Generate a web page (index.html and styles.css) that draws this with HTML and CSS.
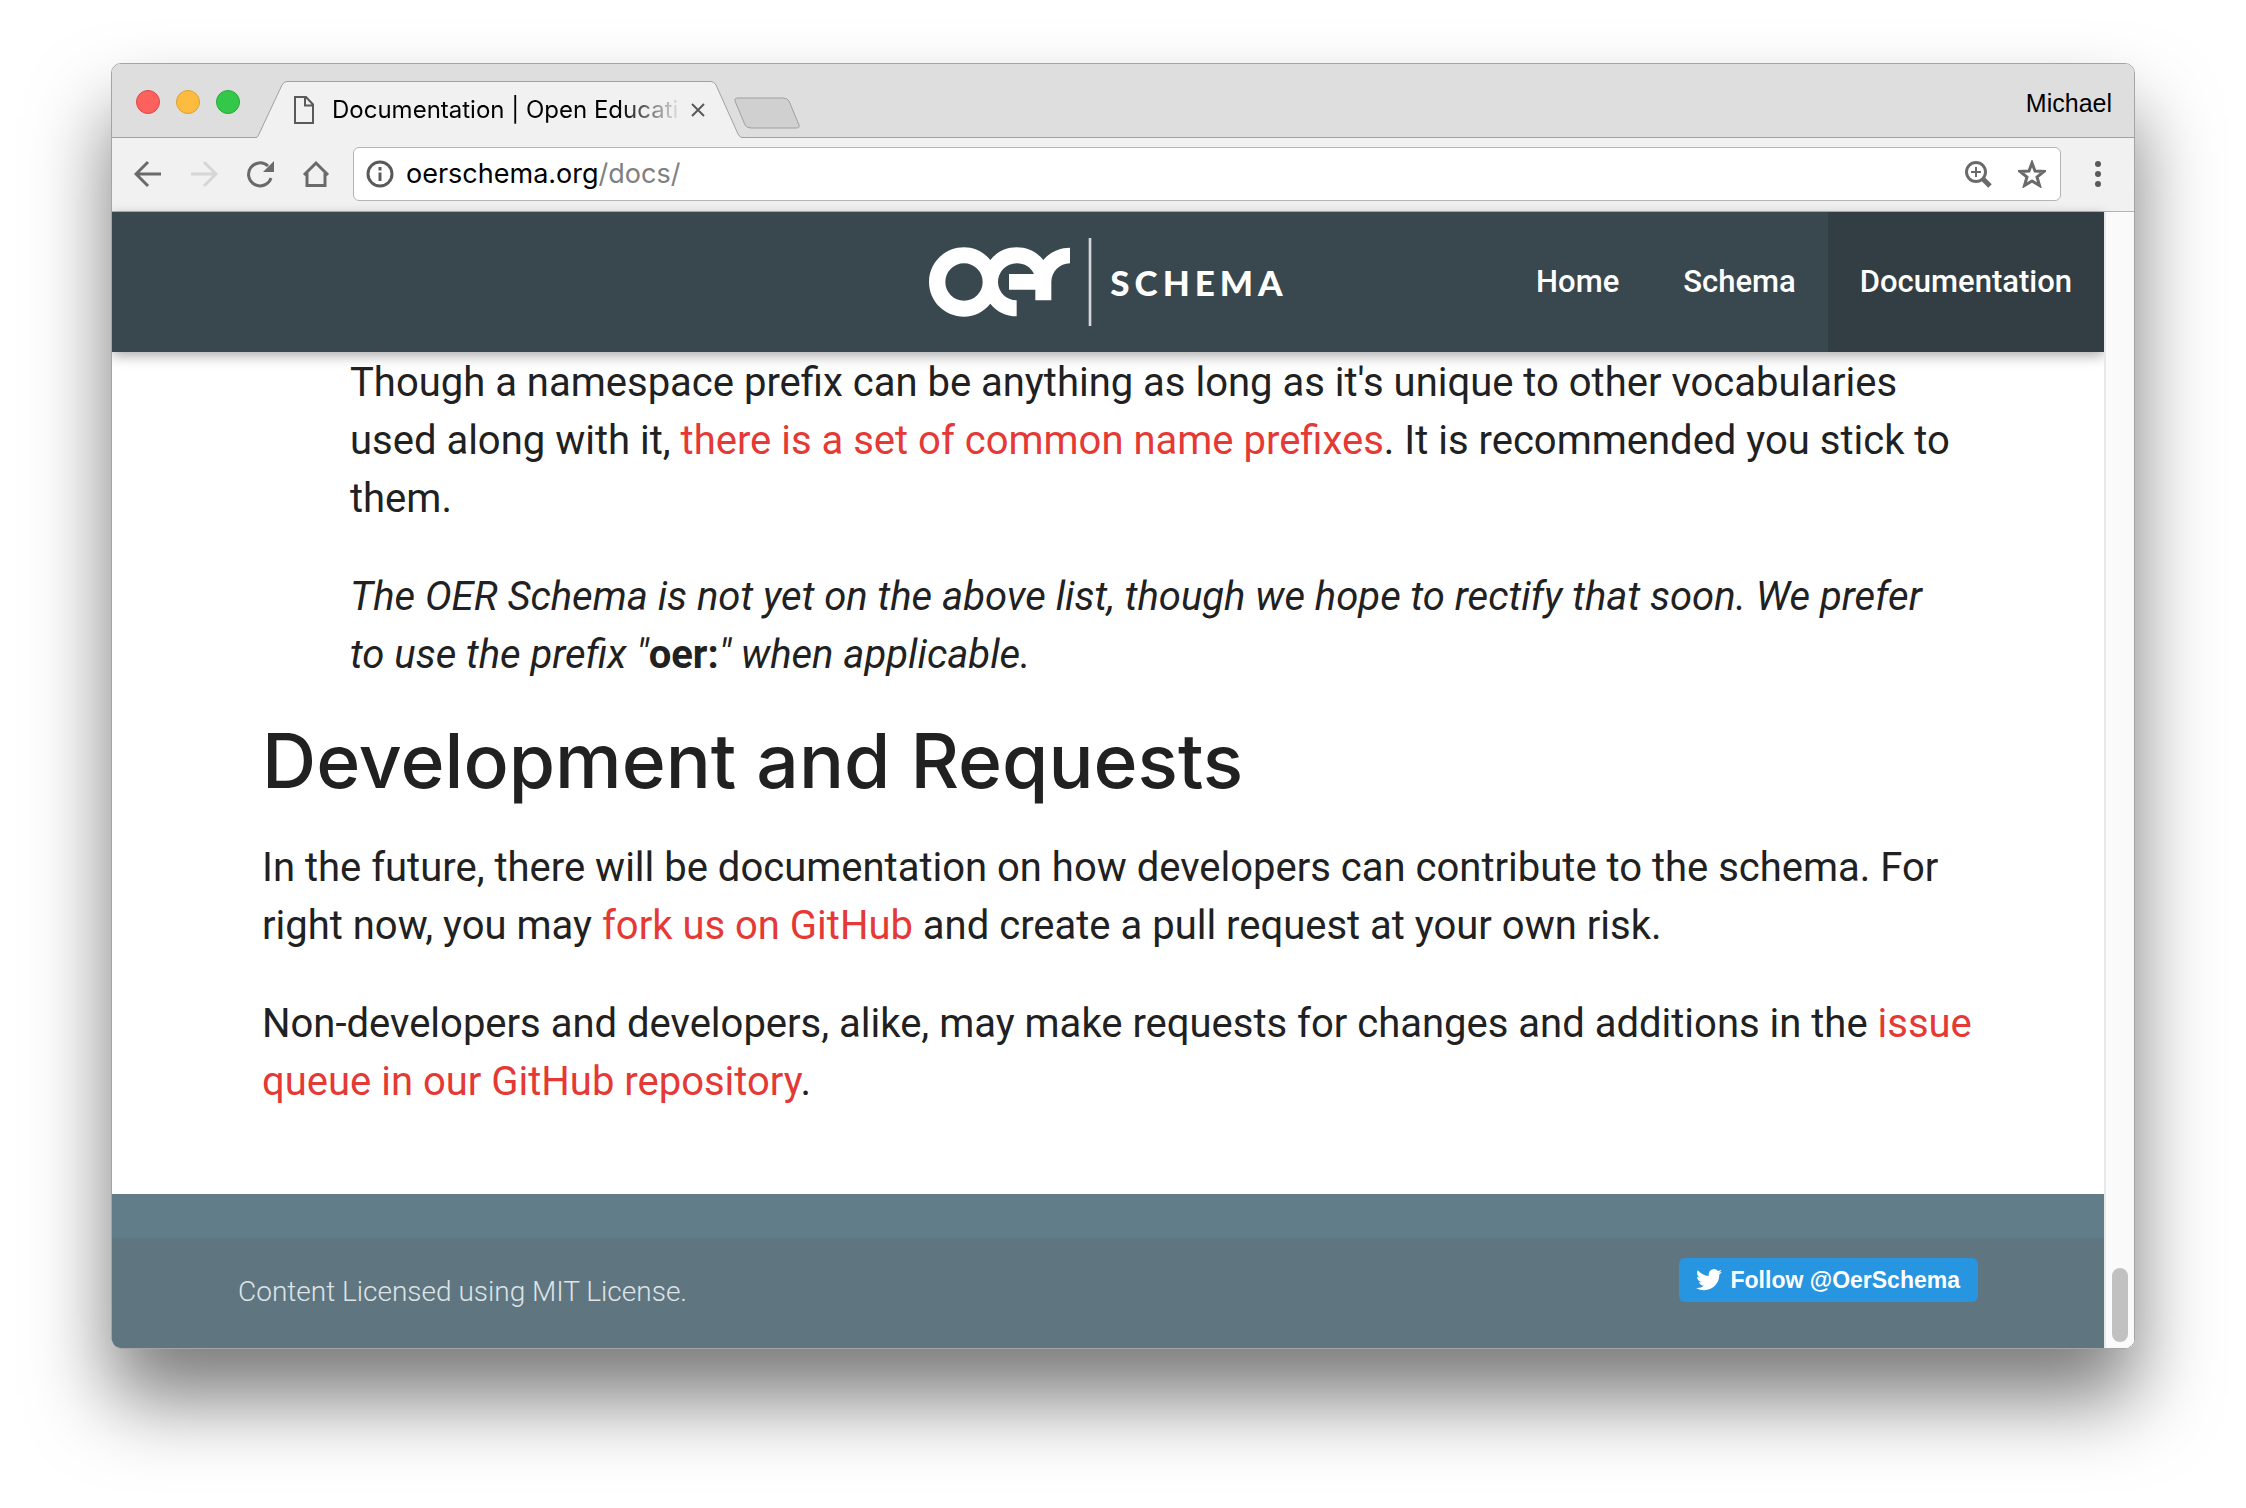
FILE: index.html
```html
<!DOCTYPE html>
<html lang="en">
<head>
<meta charset="utf-8">
<title>Documentation | Open Educational Resources Schema</title>
<link rel="stylesheet" href="styles.css">
</head>
<body>
<div class="window">
  <div class="tabstrip">
    <div class="lights">
      <button class="light light-close" aria-label="Close window"></button>
      <button class="light light-min" aria-label="Minimize window"></button>
      <button class="light light-max" aria-label="Zoom window"></button>
    </div>
    <div class="tab">
      <svg class="tab-shape" viewBox="0 0 486 58" aria-hidden="true"><path class="tab-fill" d="M0 58C2 57 2 56 3 54L26 5Q28 1.500 31 1.500H455Q458 1.500 460 5L482 54Q484 57.500 486 57.500V58Z"/><path class="tab-line" d="M0 57.500C2 57 2 56 3 54L26 5Q28 1.500 31 1.500H455Q458 1.500 460 5L482 54Q484 57.500 486 57.500"/></svg>
      <svg class="page-icon" viewBox="0 0 20 28" aria-hidden="true"><path d="M1 1H12L19 8.500V27H1ZM11 1V9.500H19"/></svg>
      <span class="tab-title">Documentation | Open Educati</span>
      <button class="tab-close" aria-label="Close tab"><svg viewBox="0 0 14 14"><path d="M1 1L13 13M13 1L1 13"/></svg></button>
    </div>
    <button class="new-tab" aria-label="New tab"><svg viewBox="0 0 66 32"><path d="M4 1H49Q53 1 55 4L65 28Q66 31 62 31H17Q13 31 11 28L1 4Q0 1 4 1Z"/></svg></button>
    <span class="profile">Michael</span>
  </div>
  <div class="toolbar">
    <div class="nav-buttons">
      <button class="tool" aria-label="Back"><svg viewBox="0 0 28 28"><path d="M27 14H3M14 2L2 14L14 26"/></svg></button>
      <button class="tool tool-off" aria-label="Forward" disabled><svg viewBox="0 0 28 28"><path d="M1 14H25M14 2L26 14L14 26"/></svg></button>
      <button class="tool" aria-label="Reload"><svg viewBox="0 0 28 28"><path d="M25 18A11.500 11.500 0 1 1 22 6"/><path class="solid" d="M28 1V12H17Z"/></svg></button>
      <button class="tool" aria-label="Home"><svg viewBox="0 0 28 28"><path d="M2 15L14 3L26 15M5 13V25.500H23V13"/></svg></button>
    </div>
    <form class="address">
      <svg class="info" viewBox="0 0 28 28" aria-hidden="true"><circle cx="14" cy="14" r="12"/><path d="M14 12.500V21M14 7V10.500"/></svg>
      <span class="url">oerschema.org<span class="path">/docs/</span></span>
      <button type="button" class="tool" aria-label="Zoom"><svg viewBox="0 0 28 28"><circle cx="12" cy="12" r="9.500"/><path class="thick" d="M19 19L26 26"/><path class="thin" d="M12 7V17M7 12H17"/></svg></button>
      <button type="button" class="tool" aria-label="Bookmark"><svg viewBox="0 0 28 28"><path d="M14 3L17 11L26 11.500L19 17L21.500 25.500L14 21L6.500 25.500L9 17L2 11.500L11 11Z"/></svg></button>
    </form>
    <button class="menu" aria-label="Menu"><svg viewBox="0 0 6 28"><circle cx="3" cy="4" r="3"/><circle cx="3" cy="14" r="3"/><circle cx="3" cy="24" r="3"/></svg></button>
  </div>
  <div class="viewport">
    <div class="page">
      <header class="site-header">
        <a class="logo" href="#">
          <svg viewBox="84 84 492 264" aria-hidden="true">
            <path fill-rule="evenodd" d="M271 150C289 127 317 112 350 112C383 112 412 127 430 150C449 127 477 113 510 113V160C479 160 454 185 454 216V271H406V239H327V192H402C393 172 373 160 350 160C319 160 294 185 294 216C294 246 319 271 350 271V319C318 319 289 304 271 281C252 304 224 320 192 320C134 320 87 274 87 216C87 158 134 112 192 112C224 112 252 127 271 150ZM192 160A56 56 0 1 0 192 272A56 56 0 1 0 192 160Z"/>
            <path class="rule" d="M566 84H574V348H566Z"/>
          </svg>
          <span class="logo-word">SCHEMA</span>
        </a>
        <nav class="site-nav">
          <a href="#">Home</a>
          <a href="#">Schema</a>
          <a class="active" href="#">Documentation</a>
        </nav>
      </header>
      <main class="content">
        <div class="indent">
          <p>Though a namespace prefix can be anything as long as it's unique to other vocabularies used along with it, <a href="#">there is a set of common name prefixes</a>. It is recommended you stick to them.</p>
          <p><em>The OER Schema is not yet on the above list, though we hope to rectify that soon. We prefer to use the prefix "<b>oer:</b>" when applicable.</em></p>
        </div>
        <h2>Development and Requests</h2>
        <p>In the future, there will be documentation on how developers can contribute to the schema. For right now, you may <a href="#">fork us on GitHub</a> and create a pull request at your own risk.</p>
        <p>Non-developers and developers, alike, may make requests for changes and additions in the <a href="#">issue queue in our GitHub repository</a>.</p>
      </main>
      <footer class="site-footer">
        <div class="footer-bar">
          <p>Content Licensed using MIT License.</p>
          <a class="follow" href="#"><svg viewBox="0 0 24 20" aria-hidden="true"><path d="M24 2.400c-.9.400-1.800.700-2.800.800 1-.6 1.800-1.600 2.200-2.700-1 .6-2 1-3.100 1.200A4.900 4.900 0 0 0 11.900 6.200C7.800 6 4.200 4 1.700.9.400 3.200 1 6 3.200 7.500c-.8 0-1.600-.2-2.200-.6 0 2.300 1.600 4.400 3.900 4.900-.7.200-1.500.2-2.200.1.600 2 2.400 3.400 4.600 3.400A9.900 9.900 0 0 1 0 17.300 14 14 0 0 0 7.500 19.500c9.100 0 14.300-7.700 14-14.600 1-.7 1.800-1.600 2.500-2.500z"/></svg>Follow @OerSchema</a>
        </div>
      </footer>
    </div>
    <div class="scrollbar"><div class="thumb"></div></div>
  </div>
</div>
</body>
</html>
```
FILE: styles.css
```css
* { box-sizing: border-box; }

body {
  margin: 0;
  padding: 63px 111px 159px;
  background: #fff;
  color: #212121;
  font-family: Roboto, "Liberation Sans", sans-serif;
}

button {
  padding: 0;
  border: 0;
  background: none;
}

svg { display: block; }

.window {
  overflow: hidden;
  border: 1px solid #a4a4a4;
  border-radius: 10px;
  box-shadow: 0 50px 80px rgba(0, 0, 0, 0.52);
}

/* Tab strip */
.tabstrip {
  display: flex;
  height: 74px;
  padding-left: 24px;
  border-bottom: 1px solid #a0a0a0;
  background: #dedede;
}

.lights {
  display: flex;
  gap: 16px;
  width: 120px;
  padding-top: 26px;
}

.light {
  width: 24px;
  height: 24px;
  border: 1px solid #df4744;
  border-radius: 50%;
  background: #fc615d;
}

.light-min { border-color: #de9f34; background: #fdbc40; }
.light-max { border-color: #27aa35; background: #34c84a; }

.tab {
  position: relative;
  display: flex;
  align-items: center;
  width: 486px;
  height: 58px;
  margin-top: 16px;
  padding: 2px 37px 0 38px;
}

.tab-shape {
  position: absolute;
  top: 0;
  left: 0;
  width: 486px;
  height: 58px;
}

.tab-fill { fill: #f1f1f1; }
.tab-line { fill: none; stroke: #a0a0a0; stroke-width: 1; }

.page-icon {
  position: relative;
  width: 20px;
  height: 28px;
  fill: none;
  stroke: #5a5a5a;
  stroke-width: 2;
}

.tab-title {
  position: relative;
  flex: 1;
  overflow: hidden;
  margin: 0 8px 0 18px;
  color: #000;
  font: 24px/32px Inter, sans-serif;
  white-space: nowrap;
  mask-image: linear-gradient(to left, transparent, #000 64px);
}

.tab-close { position: relative; }
.tab-close svg { width: 14px; height: 14px; stroke: #5a5a5a; stroke-width: 2; }

.new-tab { align-self: flex-start; margin: 33px 0 0 -8px; }
.new-tab svg { width: 66px; height: 32px; fill: #d0d0d0; stroke: #a0a0a0; }

.profile {
  margin: 23px 22px 0 auto;
  color: #000;
  font: 25px/32px "Liberation Sans", sans-serif;
}

/* Toolbar */
.toolbar {
  display: flex;
  align-items: center;
  height: 74px;
  padding: 0 33px 2px 22px;
  border-bottom: 1px solid #b4b4b4;
  background: #f1f1f1;
}

.nav-buttons { display: flex; gap: 28px; }

.tool svg {
  width: 28px;
  height: 28px;
  fill: none;
  stroke: #6a6a6a;
  stroke-width: 3;
}

.tool-off svg { stroke: #d6d6d6; }
.tool .solid { fill: #6a6a6a; stroke: none; }
.tool .thick { stroke-width: 5; }
.tool .thin { stroke-width: 2; }

.address {
  display: flex;
  flex: 1;
  align-items: center;
  gap: 26px;
  height: 54px;
  margin: 0 34px 0 23px;
  padding: 0 14px 0 12px;
  border: 1px solid #b4b4b4;
  border-radius: 6px;
  background: #fff;
}

.info { width: 28px; height: 28px; fill: none; stroke: #5a5a5a; stroke-width: 3; }

.url {
  flex: 1;
  margin-left: -14px;
  color: #000;
  font: 27px/36px Inter, sans-serif;
}

.path { color: #808080; }

.menu svg { width: 6px; height: 28px; fill: #5a5a5a; }

/* Page */
.viewport { display: flex; background: #fff; }
.page { flex: 1; }

.site-header {
  position: relative;
  display: grid;
  grid-template-columns: 1fr auto 1fr;
  height: 140px;
  background: #39474e;
  box-shadow: 0 4px 12px rgba(0, 0, 0, 0.32);
}

.logo {
  display: flex;
  grid-column: 2;
  align-items: center;
  gap: 18px;
  color: #fff;
  text-decoration: none;
}

.logo svg { width: 164px; height: 88px; fill: #fff; }
.logo .rule { fill: #d3d7d9; }

.logo-word {
  font: 900 35px/40px Lato, sans-serif;
  letter-spacing: 5px;
}

.site-nav { display: flex; justify-content: flex-end; }

.site-nav a {
  display: flex;
  align-items: center;
  padding: 0 32px 2px;
  color: #fff;
  font-size: 31px;
  font-weight: 500;
  text-decoration: none;
}

.site-nav .active { background: #323e44; }

.content { padding: 2px 130px 83px 150px; }
.indent { padding: 0 20px 0 88px; }

.content p {
  margin: 0 0 40px;
  font-size: 40px;
  line-height: 58px;
}

.content p:last-child { margin-bottom: 0; }
.content b { font-style: normal; }
.content a { color: #e53935; text-decoration: none; }

.content h2 {
  margin: 37px 0 38px;
  font: 500 75px/80px Inter, sans-serif;
}

/* Footer */
.site-footer { padding-top: 44px; background: #607d89; }

.footer-bar {
  display: flex;
  justify-content: space-between;
  align-items: flex-start;
  height: 110px;
  padding: 20px 126px 0;
  background: #5f7681;
}

.footer-bar p {
  margin: 16px 0 0;
  color: #dfe4e6;
  font-size: 28px;
  font-weight: 300;
  line-height: 36px;
}

.follow {
  display: flex;
  align-items: center;
  gap: 9px;
  height: 44px;
  padding: 0 18px 0 17px;
  border-radius: 6px;
  background: #2795e0;
  color: #fff;
  font: bold 23px/44px "Liberation Sans", sans-serif;
  text-decoration: none;
}

.follow svg { width: 26px; height: 22px; fill: #fff; }

.scrollbar {
  position: relative;
  display: flex;
  align-items: flex-end;
  width: 30px;
  padding: 6px;
  border-left: 2px solid #e8e8e8;
  background: #fafafa;
}

.thumb { width: 16px; height: 74px; border-radius: 8px; background: #c1c1c1; }
```
